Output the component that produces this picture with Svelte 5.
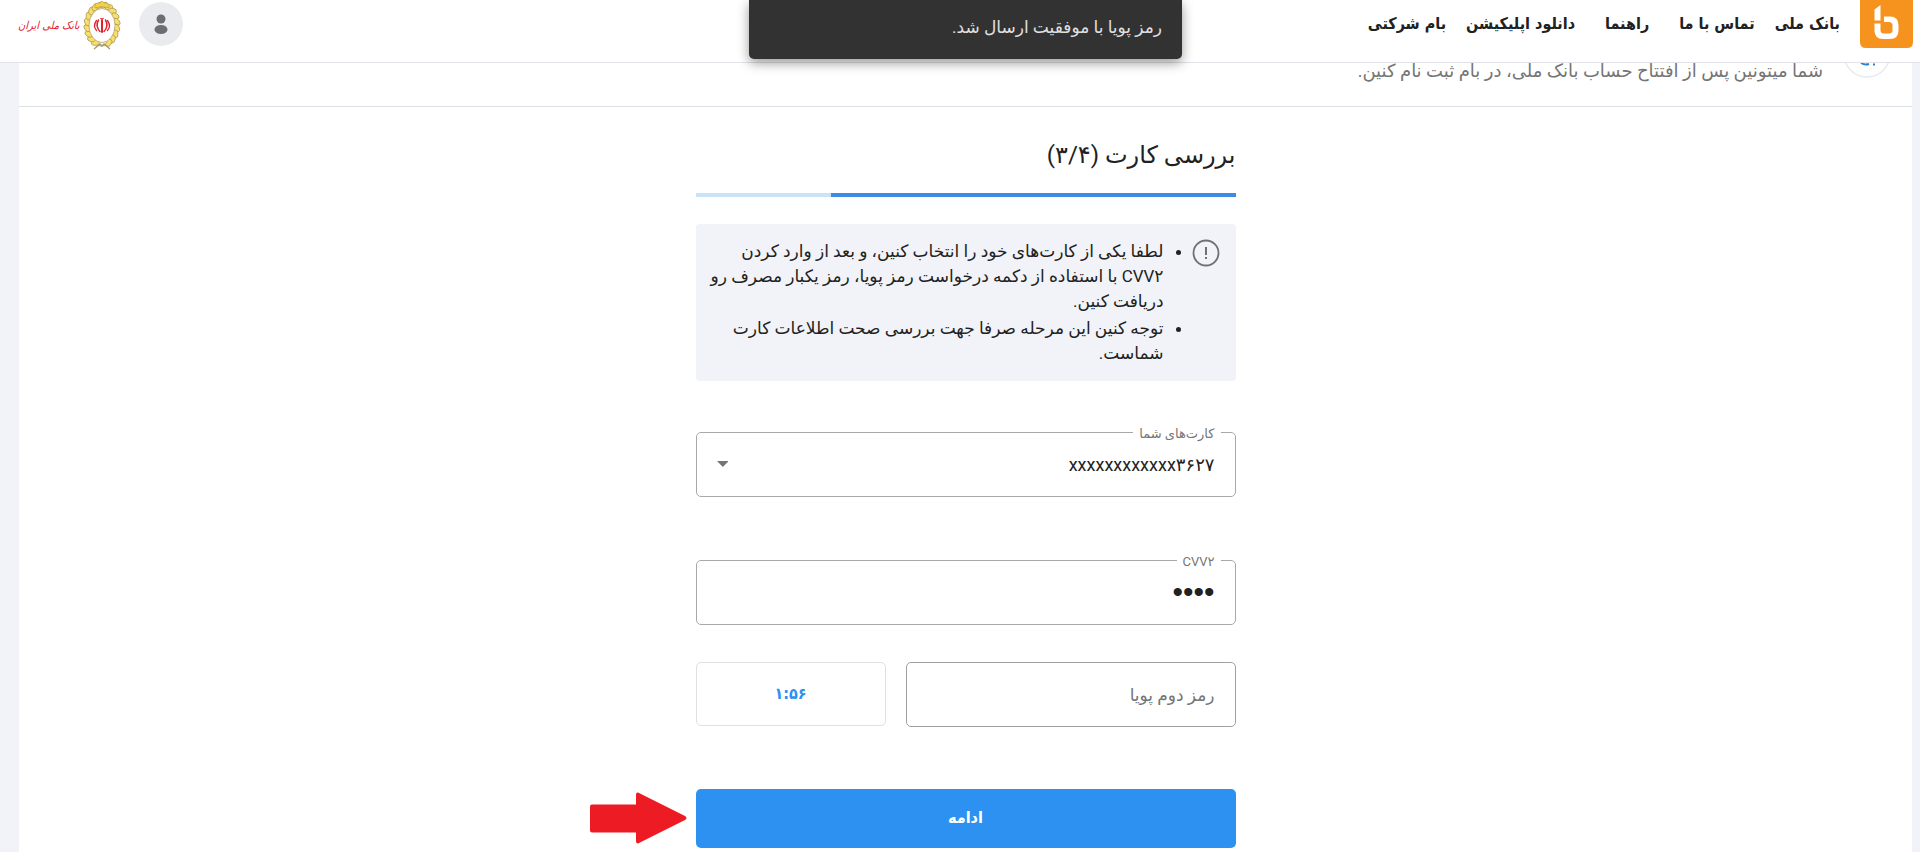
<script lang="ts">
  const links = [
    { title: 'بانک ملی', wide: false },
    { title: 'تماس با ما', wide: true },
    { title: 'راهنما', wide: true },
    { title: 'دانلود اپلیکیشن', wide: false },
    { title: 'بام شرکتی', wide: false },
  ];

  const step = 3;
  const totalSteps = 4;

  // leaves of the wreath around the bank emblem
  const leaves = Array.from({ length: 18 }, (_, i) => {
    const angle = ((i * 18 + 117) * Math.PI) / 180;
    return {
      x: 19 + 15 * Math.cos(angle),
      y: 25 + 20 * Math.sin(angle),
      turn: i * 18 + 117 + 60,
    };
  });

  let card = $state('3627');
  let cvv = $state('1234');
  let otp = $state('');

  function submit(event: Event) {
    event.preventDefault();
  }
</script>

<div class="page" dir="rtl" lang="fa">
  <header class="header">
    <a class="brand" href="/" aria-label="بام">
      <svg viewBox="0 0 53 48" width="53" height="48">
        <path d="M0 0H53V42Q53 48 47 48H6Q0 48 0 42Z" fill="#f6921e" />
        <path d="M14.500 9.500L20.500 5V20.500H14.500Z" fill="#fff" />
        <path
          d="M24 16.500H30Q38.500 16.500 38.500 25V30.500Q38.500 39 30 39H23Q14.500 39 14.500 30.500V23.500H20.500V30Q20.500 33.500 24 33.500H29Q32.500 33.500 32.500 30V25.500Q32.500 22 29 22H24Z"
          fill="#fff"
        />
      </svg>
    </a>
    <nav class="nav">
      {#each links as link}
        <a href="/" class:wide={link.wide}>{link.title}</a>
      {/each}
    </nav>
    <button class="avatar" type="button" aria-label="حساب کاربری">
      <svg viewBox="0 0 44 44" width="44" height="44" fill="#6b6e73">
        <circle cx="22" cy="17" r="4.500" />
        <ellipse cx="22" cy="27.500" rx="6.500" ry="4.500" />
      </svg>
    </button>
    <a class="bank" href="/">
      <svg viewBox="0 0 38 50" width="38" height="50">
        <ellipse cx="19" cy="26" rx="16" ry="20" fill="none" stroke="#b9a36a" stroke-width="1" />
        {#each leaves as leaf}
          <ellipse
            cx={leaf.x}
            cy={leaf.y}
            rx="4"
            ry="2.600"
            fill="#f7df6a"
            stroke="#a8925a"
            stroke-width="0.700"
            transform="rotate({leaf.turn} {leaf.x} {leaf.y})"
          />
        {/each}
        <path d="M12 8Q11 4 14 3Q17 4 19 1Q21 4 24 3Q27 4 26 8Q19 5 12 8Z" fill="#f5d33f" stroke="#a8925a" stroke-width="0.600" />
        <ellipse cx="19" cy="25.500" rx="13" ry="17" fill="#fff" stroke="#b9a36a" stroke-width="0.800" />
        <path d="M11 49L17 44L19 46L21 44L27 49" fill="none" stroke="#a39a6e" stroke-width="1.300" />
        <g fill="none" stroke="#e2232e" stroke-linecap="round">
          <path d="M19 20V32" stroke-width="2" />
          <path d="M17.500 18.500Q19 19.500 20.500 18.500" stroke-width="1" />
          <path d="M15.500 20Q12 26 17 31.500M22.500 20Q26 26 21 31.500" stroke-width="1.500" />
          <path d="M13.500 20.500Q9.500 26 13.500 30.500M24.500 20.500Q28.500 26 24.500 30.500" stroke-width="1.300" />
        </g>
      </svg>
      <span>بانک ملی ایران</span>
    </a>
    <div class="toast-layer">
      <div class="toast" role="status">رمز پویا با موفقیت ارسال شد.</div>
    </div>
  </header>

  <main class="panel">
    <section class="intro">
      <svg class="intro-icon" viewBox="0 0 48 48" width="48" height="48">
        <circle cx="24" cy="24" r="23" fill="#fff" stroke="#e6eaf1" stroke-width="1.500" />
        <path d="M18 33Q22 35.500 26 34M30 34.500H32" fill="none" stroke="#2b80d8" stroke-width="2" />
      </svg>
      <p>شما میتونین پس از افتتاح حساب بانک ملی، در بام ثبت نام کنین.</p>
    </section>

    <form class="form" onsubmit={submit}>
      <h1>بررسی کارت (۳/۴)</h1>
      <div class="progress">
        <div class="progress-fill" style="width: {(step / totalSteps) * 100}%"></div>
      </div>

      <div class="notice">
        <svg viewBox="0 0 28 28" width="28" height="28">
          <circle cx="14" cy="14" r="12.500" fill="none" stroke="#6f7176" stroke-width="1.800" />
          <path d="M14 8V16M14 18V20" stroke="#6f7176" stroke-width="2" />
        </svg>
        <ul>
          <li>
            لطفا یکی از کارت‌های خود را انتخاب کنین، و بعد از وارد کردن<br />
            CVV۲ با استفاده از دکمه درخواست رمز پویا، رمز یکبار مصرف رو<br />
            دریافت کنین.
          </li>
          <li>
            توجه کنین این مرحله صرفا جهت بررسی صحت اطلاعات کارت<br />
            شماست.
          </li>
        </ul>
      </div>

      <fieldset class="field">
        <legend><label for="card">کارت‌های شما</label></legend>
        <div class="select-box">
          <select id="card" bind:value={card}>
            <option value="3627">xxxxxxxxxxxx۳۶۲۷</option>
          </select>
          <svg viewBox="0 0 12 6" width="12" height="6"><path d="M0 0H12L6 6Z" fill="#757575" /></svg>
        </div>
      </fieldset>

      <fieldset class="field">
        <legend><label for="cvv">CVV۲</label></legend>
        <input id="cvv" class="cvv" type="password" bind:value={cvv} />
      </fieldset>

      <div class="otp-row">
        <input class="otp" type="text" placeholder="رمز دوم پویا" aria-label="رمز دوم پویا" bind:value={otp} />
        <button class="timer" type="button">۱:۵۶</button>
      </div>

      <div class="action">
        <button class="submit" type="submit">ادامه</button>
        <svg class="pointer" viewBox="0 0 98 52" width="98" height="52">
          <path
            d="M2 12.500H46V3Q46 -1 50 1.500L95 24Q98 26 95 28L50 50.500Q46 53 46 49V40.500H2Q0 40.500 0 38.500V14.500Q0 12.500 2 12.500Z"
            fill="#ed1c24"
          />
        </svg>
      </div>
    </form>
  </main>
</div>

<style>
  :global(body) {
    margin: 0;
    background: #f1f3f8;
  }

  .page,
  .page button,
  .page input,
  .page select {
    font-family: Roboto, "DejaVu Sans", sans-serif;
  }

  .page {
    color: #212121;
    font-size: 17px;
  }

  .header {
    position: sticky;
    top: 0;
    z-index: 2;
    display: flex;
    align-items: flex-start;
    box-sizing: border-box;
    height: 63px;
    padding: 0 7px 0 18px;
    background: #fff;
    border-bottom: 1px solid #e0e3e7;
  }

  .brand svg,
  .avatar svg,
  .bank svg {
    display: block;
  }

  .nav {
    display: flex;
    flex: 1;
    gap: 20px;
    margin-right: 20px;
    font-family: "DejaVu Sans Condensed", sans-serif;
    font-size: 16px;
    line-height: 48px;
  }

  .nav a {
    color: #212121;
    font-weight: 700;
    text-decoration: none;
    white-space: nowrap;
  }

  .nav a.wide {
    margin-left: 10px;
  }

  .avatar {
    margin: 2px 0 0 18px;
    padding: 0;
    border: none;
    border-radius: 50%;
    background: #e9ebee;
    cursor: pointer;
  }

  .bank {
    display: flex;
    align-items: center;
    gap: 4px;
    color: #e2232e;
    font-family: "DejaVu Sans Condensed", sans-serif;
    font-size: 11px;
    font-style: italic;
    text-decoration: none;
    white-space: nowrap;
  }

  .toast-layer {
    position: absolute;
    top: 0;
    right: 8px;
    left: 19px;
    display: flex;
    justify-content: center;
    pointer-events: none;
  }

  .toast {
    box-sizing: border-box;
    width: 433px;
    height: 59px;
    padding: 0 20px;
    border-radius: 0 0 5px 5px;
    background: #323232;
    box-shadow: 0 4px 12px rgba(0, 0, 0, 0.4);
    color: #e0e0e0;
    line-height: 54px;
  }

  .panel {
    margin: 0 8px 0 19px;
    padding-bottom: 4px;
    background: #fff;
  }

  .intro {
    display: flex;
    gap: 20px;
    height: 58px;
    margin-top: -33px;
    padding: 0 21px 18px;
    border-bottom: 1px solid #dcdfe4;
  }

  .intro p {
    align-self: flex-end;
    margin: 0;
    color: #757575;
    font-size: 18px;
    line-height: 34px;
  }

  .form {
    width: 540px;
    margin: 0 auto;
  }

  h1 {
    margin: 28px 0 18px;
    font-size: 24px;
    font-weight: 400;
    line-height: 40px;
  }

  .progress {
    height: 4px;
    background: #c9e3fa;
  }

  .progress-fill {
    height: 4px;
    background: #3a8de0;
  }

  .notice {
    display: flex;
    gap: 12px;
    margin: 27px 0 41px;
    padding: 15px 16px;
    border-radius: 4px;
    background: #f1f3f8;
  }

  .notice ul {
    margin: 0;
    padding: 0 16px 0 0;
    line-height: 25px;
    white-space: nowrap;
  }

  .notice svg {
    flex: none;
  }

  .notice li + li {
    margin-top: 2px;
  }

  .field {
    box-sizing: border-box;
    height: 75px;
    min-width: 0;
    margin: 0 0 53px;
    padding: 0 20px;
    border: 1px solid #a8a8a8;
    border-radius: 5px;
  }

  .field legend {
    margin-right: -6px;
    padding: 4px 6px 0;
    color: #757575;
    font-size: 13px;
    line-height: 16px;
  }

  .field label {
    display: block;
  }

  .select-box {
    display: flex;
    align-items: center;
  }

  .field select,
  .field input {
    width: 100%;
    height: 44px;
    padding: 0;
    border: none;
    outline: none;
    background: none;
    color: #212121;
    font-size: 18px;
    appearance: none;
  }

  .field .cvv {
    font-family: "Liberation Sans", sans-serif;
    font-size: 30px;
  }

  .otp-row {
    display: flex;
    gap: 20px;
    margin-top: -16px;
  }

  .otp {
    box-sizing: border-box;
    flex: 1;
    min-width: 0;
    height: 65px;
    padding: 0 20px;
    border: 1px solid #a0a0a0;
    border-radius: 5px;
    font-size: 17px;
  }

  .otp::placeholder {
    color: #757575;
  }

  .page .timer {
    width: 190px;
    height: 64px;
    padding: 0 0 2px;
    border: 1px solid #e0e0e0;
    border-radius: 5px;
    background: #fff;
    color: #2c91f0;
    font-family: "DejaVu Sans Condensed", sans-serif;
    font-size: 16px;
    font-weight: 700;
  }

  .action {
    position: relative;
    margin-top: 62px;
  }

  .page .submit {
    display: block;
    width: 100%;
    height: 59px;
    padding: 0 0 2px;
    border: none;
    border-radius: 5px;
    background: #2c91f0;
    color: #fff;
    font-family: "DejaVu Sans Condensed", sans-serif;
    font-size: 16px;
    font-weight: 700;
    cursor: pointer;
  }

  .pointer {
    position: absolute;
    top: 3px;
    right: 100%;
    margin-right: 8px;
  }
</style>
